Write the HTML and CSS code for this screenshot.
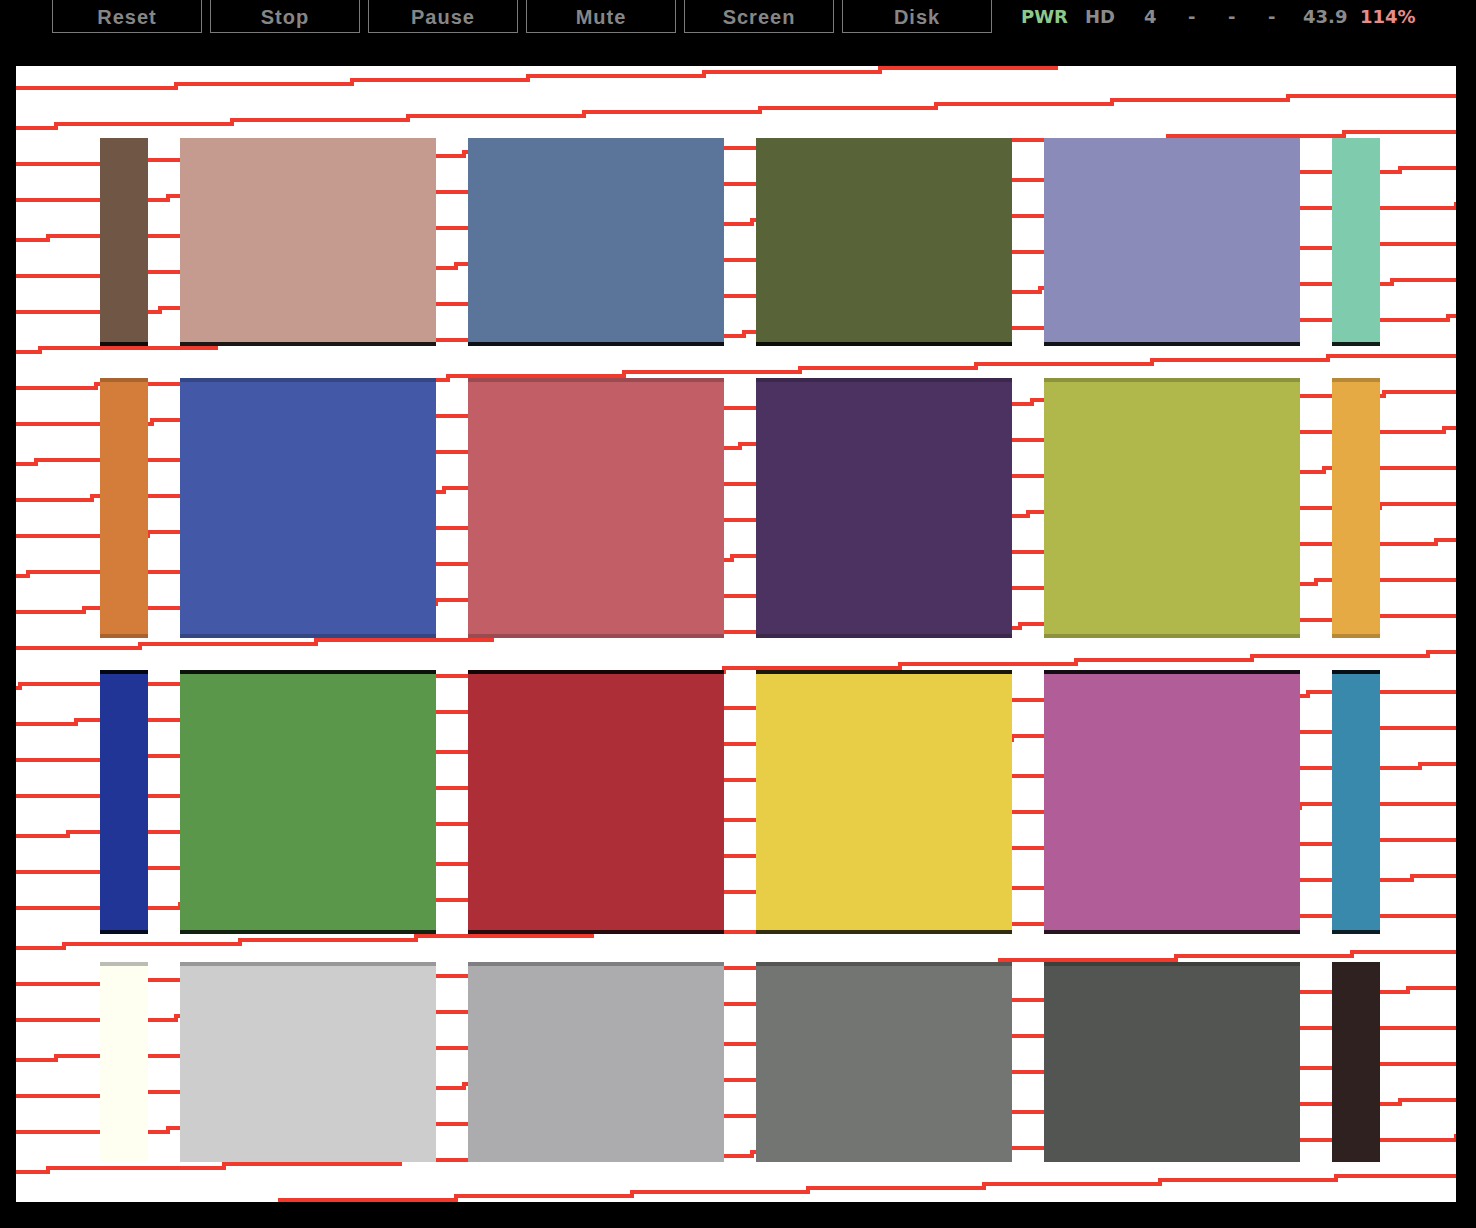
FILE: index.html
```html
<!DOCTYPE html>
<html>
<head>
<meta charset="utf-8">
<title>Emulator</title>
<link rel="stylesheet" href="styles.css">
</head>
<body>
<div class="toolbar">
  <div class="btn">Reset</div>
  <div class="btn">Stop</div>
  <div class="btn">Pause</div>
  <div class="btn">Mute</div>
  <div class="btn">Screen</div>
  <div class="btn">Disk</div>
  <div class="status">
    <span class="pwr">PWR</span><span>HD</span><span>4</span><span>-</span><span>-</span><span>-</span><span>43.9</span><span class="pct">114%</span>
  </div>
</div>
<div class="screen">
  <svg class="lines" width="1440" height="1136" viewBox="16 66 1440 1136">
    <defs>
      <path id="ln" d="M-176 92h176v-4h176v-4h176v-4h176v-4h176v-4h176v-4h176v-4h176v-4h176v-4h176v-4h176" fill="none" stroke="#ef3a2d" stroke-width="4"/>
    </defs>
    <use href="#ln" x="0" y="0"/>
    <use href="#ln" x="56" y="36"/>
    <use href="#ln" x="112" y="72"/>
    <use href="#ln" x="168" y="108"/>
    <use href="#ln" x="48" y="148"/>
    <use href="#ln" x="104" y="184"/>
    <use href="#ln" x="160" y="220"/>
    <use href="#ln" x="40" y="260"/>
    <use href="#ln" x="96" y="296"/>
    <use href="#ln" x="152" y="332"/>
    <use href="#ln" x="36" y="372"/>
    <use href="#ln" x="92" y="408"/>
    <use href="#ln" x="148" y="444"/>
    <use href="#ln" x="28" y="484"/>
    <use href="#ln" x="84" y="520"/>
    <use href="#ln" x="140" y="556"/>
    <use href="#ln" x="20" y="596"/>
    <use href="#ln" x="76" y="632"/>
    <use href="#ln" x="132" y="668"/>
    <use href="#ln" x="12" y="708"/>
    <use href="#ln" x="68" y="744"/>
    <use href="#ln" x="124" y="780"/>
    <use href="#ln" x="4" y="820"/>
    <use href="#ln" x="64" y="856"/>
    <use href="#ln" x="120" y="892"/>
    <use href="#ln" x="0" y="932"/>
    <use href="#ln" x="56" y="968"/>
    <use href="#ln" x="112" y="1004"/>
    <use href="#ln" x="168" y="1040"/>
    <use href="#ln" x="48" y="1080"/>
    <use href="#ln" x="104" y="1116"/>
  </svg>
  <div class="chart">
    <div class="row r1">
      <div class="p c1"></div><div class="p c2"></div><div class="p c3"></div><div class="p c4"></div><div class="p c5"></div><div class="p c6"></div>
    </div>
    <div class="row r2">
      <div class="p c7"></div><div class="p c8"></div><div class="p c9"></div><div class="p c10"></div><div class="p c11"></div><div class="p c12"></div>
    </div>
    <div class="row r3">
      <div class="p c13"></div><div class="p c14"></div><div class="p c15"></div><div class="p c16"></div><div class="p c17"></div><div class="p c18"></div>
    </div>
    <div class="row r4">
      <div class="p c19"></div><div class="p c20"></div><div class="p c21"></div><div class="p c22"></div><div class="p c23"></div><div class="p c24"></div>
    </div>
  </div>
</div>
</body>
</html>
```
FILE: styles.css
```css
body {
  margin: 0;
  background: #000;
}

.toolbar {
  display: flex;
  gap: 8px;
  height: 40px;
  margin-top: -7px;
  padding-left: 52px;
}

.btn {
  box-sizing: border-box;
  width: 150px;
  height: 40px;
  border: 1px solid #7a7a7a;
  padding-top: 11.5px;
  color: #868686;
  font: bold 20px/23px "Liberation Sans", Arial, sans-serif;
  letter-spacing: 1px;
  text-align: center;
}

.status {
  display: grid;
  grid-template-columns: 64px 59px 44px 40px 40px 35px 57px auto;
  margin-left: 21px;
  padding-top: 13px;
  color: #8a8a8a;
  font: bold 18px/21px "DejaVu Sans", Verdana, sans-serif;
  white-space: nowrap;
}

.pwr { color: #8ec88b; }
.pct { color: #e58d8b; }

.screen {
  position: relative;
  width: 1440px;
  height: 1136px;
  margin: 33px 0 0 16px;
  background: #fff;
}

.lines {
  position: absolute;
  left: 0;
  top: 0;
}

.chart {
  position: relative;
  display: flex;
  flex-direction: column;
  gap: 32px;
  padding: 72px 0 0 84px;
}

.row {
  display: grid;
  grid-template-columns: 48px 256px 256px 256px 256px 48px;
  column-gap: 32px;
}

.p { box-sizing: border-box; }

.r1 { height: 208px; }
.r2 { height: 260px; }
.r3 { height: 264px; }
.r4 { height: 200px; margin-top: -4px; }

.r1 .p { border-bottom: 4px solid rgba(0, 0, 0, 0.86); }
.r2 .p { border-top: 4px solid rgba(0, 0, 0, 0.2); border-bottom: 4px solid rgba(0, 0, 0, 0.2); }
.r3 .p { border-top: 4px solid rgba(0, 0, 0, 0.88); border-bottom: 4px solid rgba(0, 0, 0, 0.78); }
.r4 .p { border-top: 4px solid rgba(0, 0, 0, 0.26); }
.r4 .c24 { border-top-color: rgba(0, 0, 0, 0.05); }

.c1 { background: #705745; }
.c2 { background: #c69b8f; }
.c3 { background: #5a7599; }
.c4 { background: #586437; }
.c5 { background: #8a8bb8; }
.c6 { background: #7ecbae; }
.c7 { background: #d47c3a; }
.c8 { background: #4358a6; }
.c9 { background: #c15e66; }
.c10 { background: #4c3260; }
.c11 { background: #b0b84b; }
.c12 { background: #e5aa43; }
.c13 { background: #213597; }
.c14 { background: #5a974b; }
.c15 { background: #ae2e37; }
.c16 { background: #e8ce47; }
.c17 { background: #b05d98; }
.c18 { background: #3889ab; }
.c19 { background: #fefff0; }
.c20 { background: #cdcdcd; }
.c21 { background: #acabad; }
.c22 { background: #737572; }
.c23 { background: #535552; }
.c24 { background: #2f2120; }
```
